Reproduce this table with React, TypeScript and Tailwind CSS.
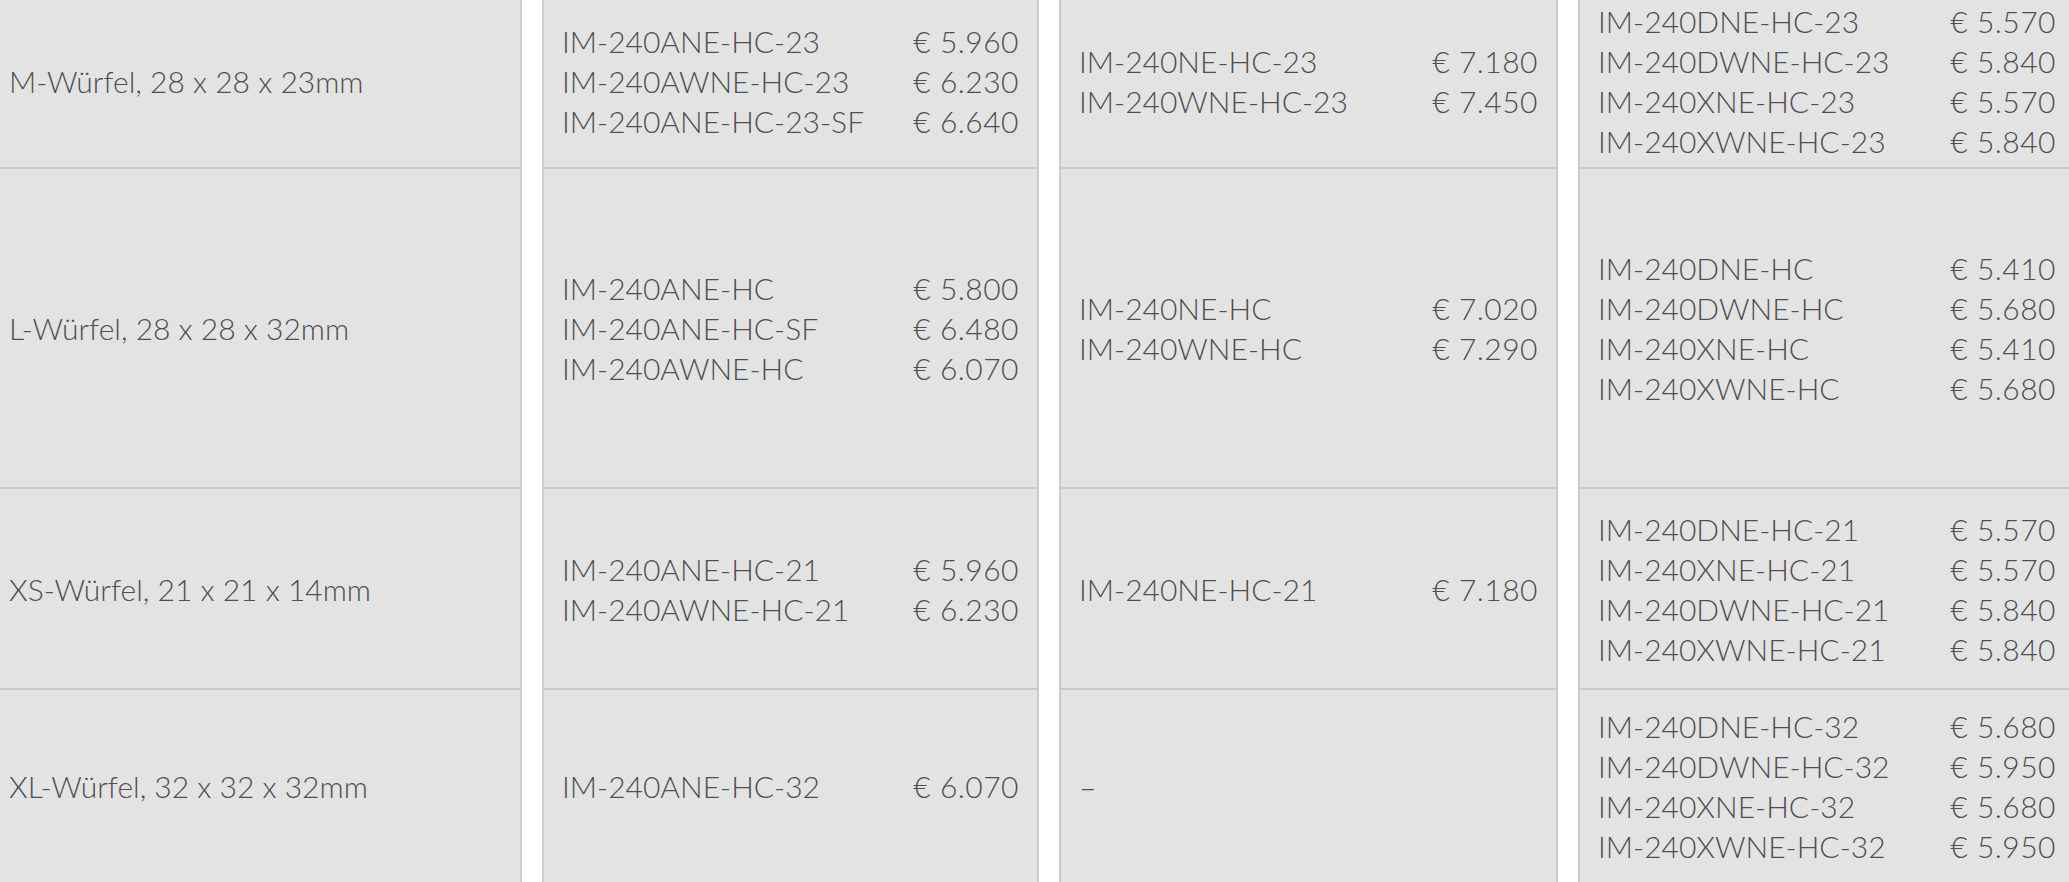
import React from "react";

type Line = [string, string];

type Row = {
  label: string;
  h: string;
  a: Line[];
  b: Line[] | null;
  c: Line[];
};

const rows: Row[] = [
  {
    label: "M-Würfel, 28 x 28 x 23mm",
    h: "pb-[5px]",
    a: [
      ["IM-240ANE-HC-23", "€ 5.960"],
      ["IM-240AWNE-HC-23", "€ 6.230"],
      ["IM-240ANE-HC-23-SF", "€ 6.640"],
    ],
    b: [
      ["IM-240NE-HC-23", "€ 7.180"],
      ["IM-240WNE-HC-23", "€ 7.450"],
    ],
    c: [
      ["IM-240DNE-HC-23", "€ 5.570"],
      ["IM-240DWNE-HC-23", "€ 5.840"],
      ["IM-240XNE-HC-23", "€ 5.570"],
      ["IM-240XWNE-HC-23", "€ 5.840"],
    ],
  },
  {
    label: "L-Würfel, 28 x 28 x 32mm",
    h: "",
    a: [
      ["IM-240ANE-HC", "€ 5.800"],
      ["IM-240ANE-HC-SF", "€ 6.480"],
      ["IM-240AWNE-HC", "€ 6.070"],
    ],
    b: [
      ["IM-240NE-HC", "€ 7.020"],
      ["IM-240WNE-HC", "€ 7.290"],
    ],
    c: [
      ["IM-240DNE-HC", "€ 5.410"],
      ["IM-240DWNE-HC", "€ 5.680"],
      ["IM-240XNE-HC", "€ 5.410"],
      ["IM-240XWNE-HC", "€ 5.680"],
    ],
  },
  {
    label: "XS-Würfel, 21 x 21 x 14mm",
    h: "",
    a: [
      ["IM-240ANE-HC-21", "€ 5.960"],
      ["IM-240AWNE-HC-21", "€ 6.230"],
    ],
    b: [["IM-240NE-HC-21", "€ 7.180"]],
    c: [
      ["IM-240DNE-HC-21", "€ 5.570"],
      ["IM-240XNE-HC-21", "€ 5.570"],
      ["IM-240DWNE-HC-21", "€ 5.840"],
      ["IM-240XWNE-HC-21", "€ 5.840"],
    ],
  },
  {
    label: "XL-Würfel, 32 x 32 x 32mm",
    h: "",
    a: [["IM-240ANE-HC-32", "€ 6.070"]],
    b: null,
    c: [
      ["IM-240DNE-HC-32", "€ 5.680"],
      ["IM-240DWNE-HC-32", "€ 5.950"],
      ["IM-240XNE-HC-32", "€ 5.680"],
      ["IM-240XWNE-HC-32", "€ 5.950"],
    ],
  },
];

function Prices({ lines, right }: { lines: Line[]; right?: boolean }) {
  return (
    <div className="grid w-full grid-cols-[1fr_auto]">
      {lines.map(([name, price]) => (
        <React.Fragment key={name}>
          <span className="whitespace-nowrap">{name}</span>
          <span className={`whitespace-nowrap tracking-[0.5px] ${right ? "text-right" : "text-left"}`}>{price}</span>
        </React.Fragment>
      ))}
    </div>
  );
}

export default function App() {
  const cell = "flex items-center bg-[#e3e3e3] border-b-2 border-[#cbcbcb]";
  return (
    <div
      className="h-[882px] w-[2069px] overflow-hidden bg-white text-[30px] leading-[40px] font-light text-[#4f4f4f]"
      style={{ fontFamily: "Lato, 'Liberation Sans', sans-serif" }}
    >
      <div className="grid grid-cols-[522px_497px_499px_498px] grid-rows-[169px_320px_201px_194px] gap-x-[20px]">
        {rows.map((r) => (
          <React.Fragment key={r.label}>
            <div className={`${cell} ${r.h} border-r-2 pl-[9px]`}>{r.label}</div>
            <div className={`${cell} ${r.h} border-x-2 px-[18px]`}>
              <Prices lines={r.a} />
            </div>
            <div className={`${cell} ${r.h} border-x-2 px-[18px]`}>
              {r.b ? <Prices lines={r.b} /> : <span>–</span>}
            </div>
            <div className={`${cell} ${r.h} border-x-2 px-[18px]`}>
              <Prices lines={r.c} right />
            </div>
          </React.Fragment>
        ))}
      </div>
    </div>
  );
}
